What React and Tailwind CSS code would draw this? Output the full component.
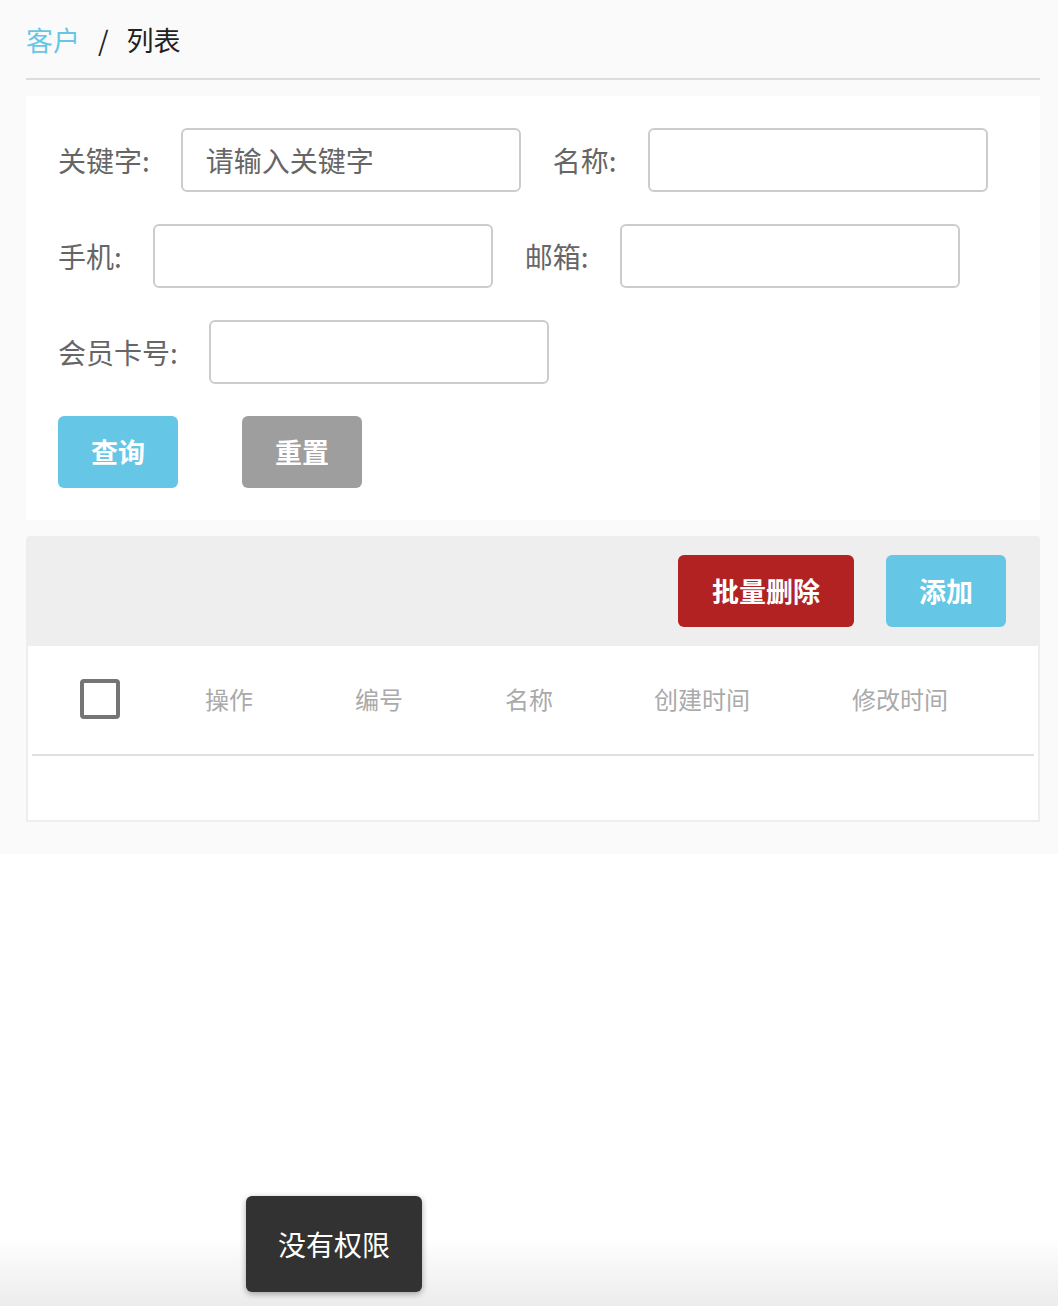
import React from "react";

const font = { fontFamily: '"Noto Sans CJK SC", "Noto Sans", sans-serif' };

const Field = ({ label, placeholder }) => (
  <div className="flex items-center">
    <span className="text-[28px] text-[#666] mr-[31px] leading-none">{label}</span>
    <input
      className="w-[340px] h-[64px] border-2 border-[#ccc] rounded-[6px] px-[23px] text-[28px] text-[#333] placeholder:text-[#666] outline-none bg-white"
      placeholder={placeholder}
    />
  </div>
);

const App = () => {
  return (
    <div className="relative min-h-[1306px] bg-white" style={font}>
      <div className="bg-[#fafafa] pl-[26px] pr-[18px] pb-[32px]">
        {/* Breadcrumb */}
        <div className="h-[80px] flex items-center border-b-2 border-[#ddd] text-[27px] leading-none">
          <span className="text-[#66c6e6]">客户</span>
          <span className="mx-[18px] text-[#222]">/</span>
          <span className="text-[#222]">列表</span>
        </div>

        {/* Search form */}
        <div className="mt-[16px] bg-white p-[32px]">
          <div className="flex flex-wrap gap-[32px] w-[950px]">
            <Field label="关键字:" placeholder="请输入关键字" />
            <Field label="名称:" />
            <Field label="手机:" />
            <Field label="邮箱:" />
            <Field label="会员卡号:" />
          </div>
          <div className="flex gap-[64px] mt-[32px]">
            <button className="w-[120px] h-[72px] rounded-[6px] bg-[#65c6e6] text-white text-[27px] font-bold">查询</button>
            <button className="w-[120px] h-[72px] rounded-[6px] bg-[#9e9e9e] text-white text-[27px] font-bold">重置</button>
          </div>
        </div>

        {/* Toolbar */}
        <div className="mt-[16px] bg-[#eeeeee] rounded-t-[4px] h-[110px] flex items-center justify-end gap-[32px] pr-[34px]">
          <button className="w-[176px] h-[72px] rounded-[6px] bg-[#b22222] text-white text-[27px] font-bold">批量删除</button>
          <button className="w-[120px] h-[72px] rounded-[6px] bg-[#65c6e6] text-white text-[27px] font-bold">添加</button>
        </div>

        {/* Table */}
        <div className="bg-white border-2 border-t-0 border-[#eee] px-[4px]">
          <div className="h-[110px] flex items-center border-b-2 border-[#e0e0e0] text-[24px] text-[#aaa] pb-[2px]">
            <div className="ml-[48px] w-[40px] h-[40px] border-[4px] border-[#757575] rounded-[4px]" />
            <span className="ml-[85px]">操作</span>
            <span className="ml-[102px]">编号</span>
            <span className="ml-[102px]">名称</span>
            <span className="ml-[101px]">创建时间</span>
            <span className="ml-[102px]">修改时间</span>
          </div>
          <div className="h-[64px]" />
        </div>
      </div>

      {/* Bottom shade */}
      <div className="absolute left-0 right-0 bottom-0 h-[70px] bg-gradient-to-b from-white to-[#ececec]" />

      {/* Toast */}
      <div className="absolute left-[246px] top-[1196px] w-[176px] h-[96px] rounded-[6px] bg-[#323232] text-white text-[28px] flex items-center justify-center shadow-[0_2px_6px_rgba(0,0,0,0.35)]">
        没有权限
      </div>
    </div>
  );
};

export default App;
